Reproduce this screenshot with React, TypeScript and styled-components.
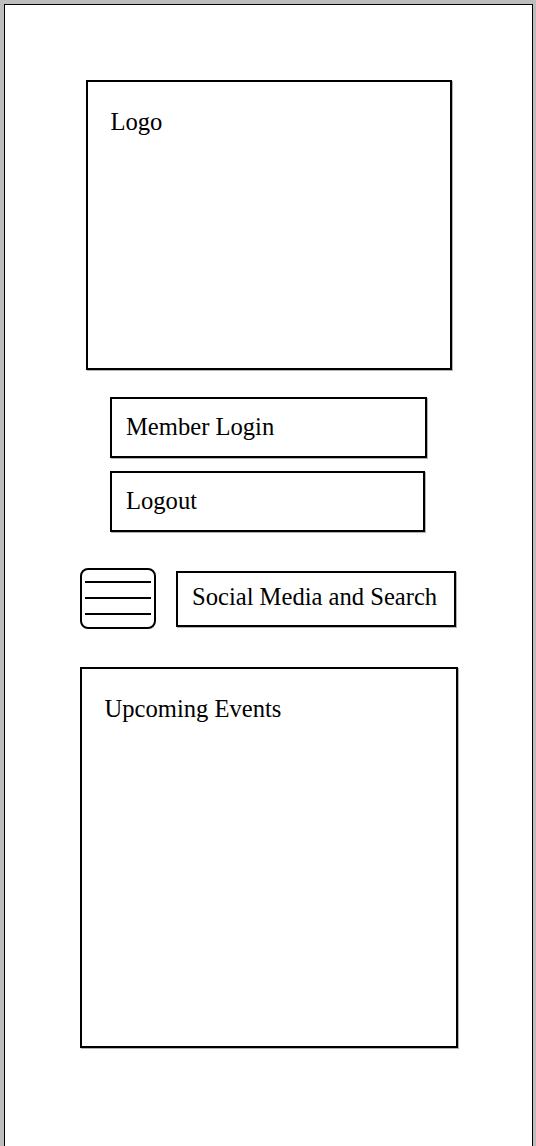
import React from 'react';
import styled, { createGlobalStyle } from 'styled-components';

const GlobalStyle = createGlobalStyle`
  html, body {
    margin: 0;
    padding: 0;
    background: #bdbdbd;
  }
  body {
    font-family: 'Liberation Serif', 'Times New Roman', serif;
    color: #000;
  }
`;

const Page = styled.div`
  margin: 4px 3px 0 4px;
  min-height: 1142px;
  box-sizing: border-box;
  background: #fff;
  border: 1px solid #000;
  border-bottom: none;
  display: flex;
  flex-direction: column;
  align-items: center;
  padding-top: 75px;
`;

const Panel = styled.section<{ $w: number; $h: number }>`
  box-sizing: border-box;
  width: ${(p) => p.$w}px;
  height: ${(p) => p.$h}px;
  border: 2px solid #000;
  box-shadow: 1px 1px 0 rgba(0, 0, 0, 0.3);
  padding: 26px 0 0 23px;
  font-size: 24.6px;
  line-height: 1.15;
`;

const Button = styled.div<{ $w: number }>`
  box-sizing: border-box;
  width: ${(p) => p.$w}px;
  height: 61px;
  border: 2px solid #000;
  box-shadow: 1px 1px 0 rgba(0, 0, 0, 0.3);
  display: flex;
  align-items: center;
  padding: 0 0 2px 14px;
  font-size: 24.6px;
`;

const ButtonStack = styled.div`
  display: flex;
  flex-direction: column;
  align-items: flex-start;
  gap: 13px;
  width: 317px;
  margin-top: 27px;
`;

const Row = styled.div`
  display: flex;
  align-items: center;
  gap: 20px;
  margin-top: 36px;
  width: 377px;
`;

const Menu = styled.div`
  box-sizing: border-box;
  width: 76px;
  height: 61px;
  border: 2px solid #000;
  border-radius: 8px;
  display: flex;
  flex-direction: column;
  justify-content: center;
  gap: 14px;
  padding: 0 3px 2px;
`;

const MenuLine = styled.span`
  display: block;
  height: 2px;
  background: #000;
`;

const Search = styled.div`
  box-sizing: border-box;
  width: 280px;
  height: 56px;
  border: 2px solid #000;
  box-shadow: 1px 1px 0 rgba(0, 0, 0, 0.3);
  display: flex;
  align-items: center;
  padding: 0 0 4px 14px;
  font-size: 24.6px;
  white-space: nowrap;
`;

const EventsWrap = styled.div`
  margin-top: 38px;
`;

export default function App() {
  return (
    <>
      <GlobalStyle />
      <Page>
        <Panel $w={366} $h={290}>Logo</Panel>
        <ButtonStack>
          <Button $w={317}>Member Login</Button>
          <Button $w={315}>Logout</Button>
        </ButtonStack>
        <Row>
          <Menu>
            <MenuLine />
            <MenuLine />
            <MenuLine />
          </Menu>
          <Search>Social Media and Search</Search>
        </Row>
        <EventsWrap>
          <Panel $w={378} $h={381}>Upcoming Events</Panel>
        </EventsWrap>
      </Page>
    </>
  );
}
